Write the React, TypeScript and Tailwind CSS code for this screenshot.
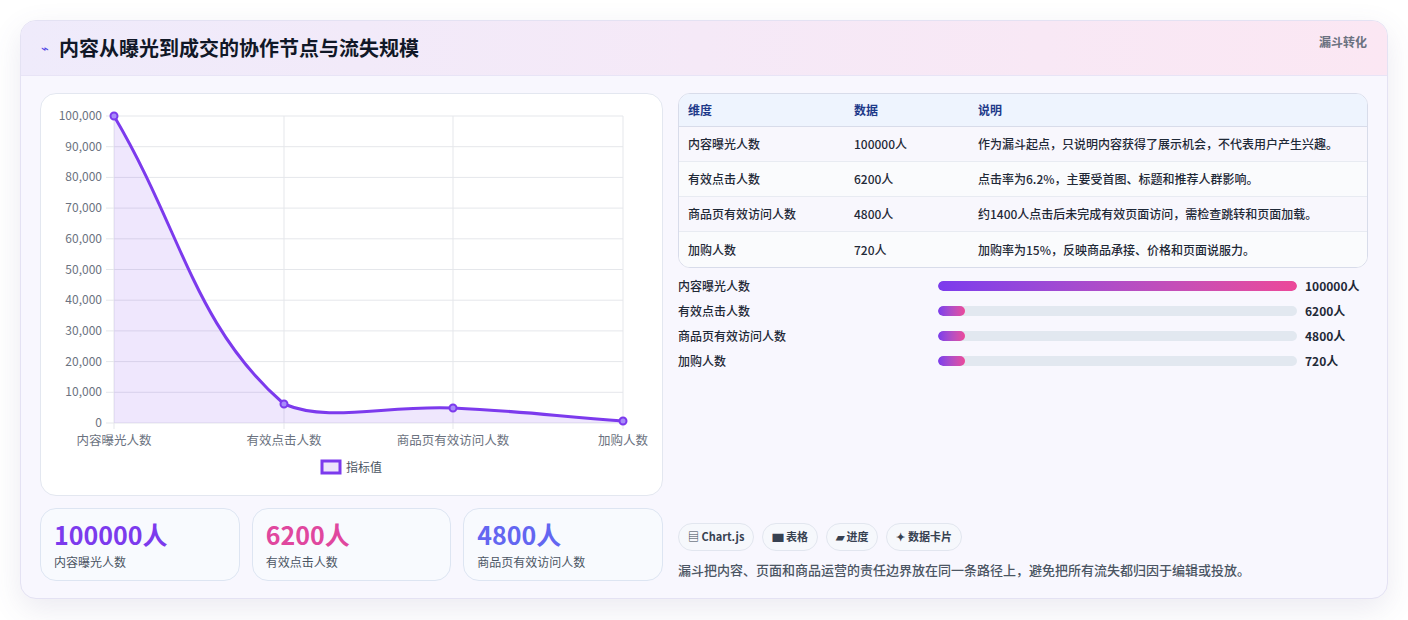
const F = { fontFamily: '"Noto Sans CJK SC", "Noto Sans", sans-serif' };
const rows = [
  ["内容曝光人数", "100000人", "作为漏斗起点，只说明内容获得了展示机会，不代表用户产生兴趣。", 100],
  ["有效点击人数", "6200人", "点击率为6.2%，主要受首图、标题和推荐人群影响。", 6.2],
  ["商品页有效访问人数", "4800人", "约1400人点击后未完成有效页面访问，需检查跳转和页面加载。", 4.8],
  ["加购人数", "720人", "加购率为15%，反映商品承接、价格和页面说服力。", 0.72],
];
function Chart() {
  const x0 = 73, x1 = 582, y0 = 22, y1 = 329;
  const ticks = Array.from({ length: 11 }, (_, i) => i);
  const xs = [73, 243, 412, 582];
  const dx = 40, dy = 93;
  const path = `M${113-dx},${115-dy} C${181-dx},${230-dy} ${193-dx},${325-dy} ${283-dx},${403-dy} C${328-dx},${422-dy} ${384-dx},${404-dy} ${452-dx},${407-dy} C${520-dx},${410-dy} ${554-dx},${415-dy} ${622-dx},${420-dy}`;
  const pts = [[113,115],[283,403],[452,407],[622,420]].map(([a,b])=>[a-dx,b-dy]);
  return (
    <svg width="621" height="400" style={{ display: "block", fontFamily: '"Noto Sans CJK SC", sans-serif' }}>
      {ticks.map(i => {
        const y = y1 - (y1 - y0) * i / 10;
        return (
          <g key={i}>
            <line x1={x0 - 8} x2={x1} y1={y} y2={y} stroke="#e5e7eb" />
            <text x={x0 - 12} y={y + 4} textAnchor="end" fontSize="12" fill="#6b7280">{i === 0 ? "0" : (i * 10000).toLocaleString("en-US")}</text>
          </g>
        );
      })}
      {xs.map((x, i) => <line key={i} x1={x} x2={x} y1={y0} y2={y1 + 6} stroke="#e5e7eb" />)}
      <path d={`${path} L${x1},${y1} L${x0},${y1} Z`} fill="#7c3aed" fillOpacity="0.12" />
      <path d={path} fill="none" stroke="#7c3aed" strokeWidth="3" />
      {pts.map(([a, b], i) => <circle key={i} cx={a} cy={b} r="3.5" fill="#a78bfa" stroke="#7c3aed" strokeWidth="2" />)}
      {["内容曝光人数","有效点击人数","商品页有效访问人数","加购人数"].map((t,i)=>(
        <text key={i} x={xs[i]} y={351} textAnchor="middle" fontSize="12.5" fill="#6b7280">{t}</text>
      ))}
      <rect x="281" y="367" width="18" height="12" fill="#ede4fb" stroke="#7c3aed" strokeWidth="3" />
      <text x="305" y="378" fontSize="12" fill="#4b5563">指标值</text>
    </svg>
  );
}
export default function App() {
  return (
    <div className="w-[1408px] h-[620px] bg-white pt-5 px-5" style={F}>
      <div className="rounded-2xl border border-[#e4e2f3] shadow-[0_10px_30px_rgba(90,80,140,0.12)] overflow-hidden bg-[#f8f7fe]">
        <div className="h-[55px] flex items-center justify-between px-5 bg-gradient-to-r from-[#efebfb] to-[#fbe7f3] border-b border-[#e8e4f6]">
          <div className="flex items-center gap-[10px]">
            <span className="text-[13px] text-[#4f46e5]">⌁</span>
            <span className="text-[20px] font-bold text-[#111827]">内容从曝光到成交的协作节点与流失规模</span>
          </div>
          <span className="text-[12px] font-bold text-[#6b7280] self-start mt-3">漏斗转化</span>
        </div>
        <div className="flex gap-[15px] p-[19px] pt-[17px] pb-[17px]">
          <div className="w-[623px] flex flex-col gap-3">
            <div className="h-[403px] bg-white rounded-2xl border border-[#e3e7f0]"><Chart /></div>
            <div className="grid grid-cols-3 gap-3">
              {[["100000人","内容曝光人数","text-[#7c3aed]"],["6200人","有效点击人数","text-[#e0479e]"],["4800人","商品页有效访问人数","text-[#6366f1]"]].map(([v,l,c])=>(
                <div key={l} className="h-[73px] rounded-2xl border border-[#dde5f2] bg-[#f8fafe] px-[13px] pt-2">
                  <div className={`text-[25px] font-bold leading-[34px] ${c}`}>{v}</div>
                  <div className="text-[12px] text-[#4b5563] mt-0.5">{l}</div>
                </div>
              ))}
            </div>
          </div>
          <div className="flex-1 flex flex-col">
            <div className="rounded-xl border border-[#d8dcea] overflow-hidden bg-white text-[12px]">
              <div className="h-[33px] flex items-center bg-[#eef4fe] border-b border-[#d8dcea] text-[#1e3a8a] font-bold px-[9px]">
                <span className="w-[166px]">维度</span><span className="w-[124px]">数据</span><span>说明</span>
              </div>
              {rows.map((r, i) => (
                <div key={i} className={`h-[35px] flex items-center px-[9px] text-[#1f2937] font-medium ${i < 3 ? "border-b border-[#e8ebf2]" : ""} ${i % 2 ? "bg-[#fafbfd]" : "bg-[#f8f7fd]"}`}>
                  <span className="w-[166px]">{r[0]}</span><span className="w-[124px]">{r[1]}</span><span>{r[2]}</span>
                </div>
              ))}
            </div>
            <div className="flex flex-col gap-[9px] mt-[10px]">
              {rows.map((r, i) => (
                <div key={i} className="flex items-center h-[16px] text-[12px] font-medium text-[#1f2937]">
                  <span className="w-[260px]">{r[0]}</span>
                  <div className="w-[359px] h-[10px] rounded-full bg-[#e2e8f0] overflow-hidden">
                    <div className="h-full rounded-full bg-gradient-to-r from-[#7c3aed] to-[#ec4899]" style={{ width: `${Math.max(r[3] as number, 7.5)}%` }} />
                  </div>
                  <span className="ml-2 font-bold">{r[1]}</span>
                </div>
              ))}
            </div>
            <div className="mt-auto flex gap-2 mb-[9px]">
              {["▤ Chart.js","▆ 表格","▰ 进度","✦ 数据卡片"].map(t => (
                <span key={t} className="h-[28px] px-[9px] flex items-center rounded-full border border-[#e2e6ef] bg-[#f6f8fc] text-[11px] font-bold text-[#374151]">{t}</span>
              ))}
            </div>
            <div className="text-[13px] text-[#4b5563] font-medium mb-[2px]">漏斗把内容、页面和商品运营的责任边界放在同一条路径上，避免把所有流失都归因于编辑或投放。</div>
          </div>
        </div>
      </div>
    </div>
  );
}
